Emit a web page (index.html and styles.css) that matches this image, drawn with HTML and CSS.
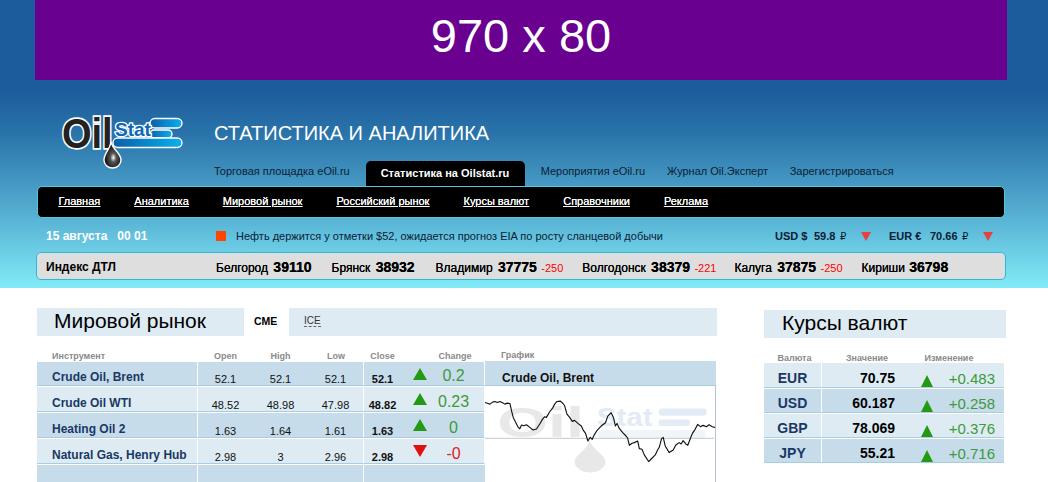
FILE: index.html
```html
<!DOCTYPE html>
<html lang="ru">
<head>
<meta charset="utf-8">
<title>OilStat</title>
<link rel="stylesheet" href="styles.css">
</head>
<body>
<div class="page">
  <header class="head">
    <div class="banner">970 x 80</div>
    <div class="brand">
      <svg class="logo" width="125" height="65" viewBox="0 -10 125 65">
        <defs>
          <linearGradient id="bar" x1="0" x2="1" y1="0" y2="0">
            <stop offset="0" stop-color="#0a5fa8"/>
            <stop offset="1" stop-color="#0ab0ee"/>
          </linearGradient>
          <radialGradient id="drop" cx="0.55" cy="0.6" r="0.5">
            <stop offset="0" stop-color="#fff"/>
            <stop offset="0.35" stop-color="#555"/>
            <stop offset="1" stop-color="#111"/>
          </radialGradient>
        </defs>
        <rect x="90" y="3.5" width="32" height="9.5" rx="4.7" fill="url(#bar)" stroke="#fff" stroke-width="1.4"/>
        <rect x="90" y="15" width="22" height="8" rx="4" fill="url(#bar)" stroke="#fff" stroke-width="1.4"/>
        <rect x="53" y="23" width="69" height="9.5" rx="4.7" fill="url(#bar)" stroke="#fff" stroke-width="1.4"/>
        <text class="logo-stat" x="55" y="21">Stat</text>
        <text class="logo-oil" x="2" y="29" transform="scale(1 1.13)">Oil</text>
        <path d="M51 27 C50 35 44 38 44 45 A8.5 8 0 0 0 61 45 C61 38 53 35 51 27 Z" fill="url(#drop)" stroke="#fff" stroke-width="1.4"/>
      </svg>
      <h1 class="brand-title">СТАТИСТИКА И АНАЛИТИКА</h1>
    </div>
    <div class="tabs">
      <a class="tab">Торговая площадка eOil.ru</a>
      <a class="tab tab-active">Статистика на Oilstat.ru</a>
      <a class="tab">Мероприятия eOil.ru</a>
      <a class="tab tab-j">Журнал Oil.Эксперт</a>
      <a class="tab tab-r">Зарегистрироваться</a>
    </div>
    <nav class="nav">
      <a>Главная</a>
      <a>Аналитика</a>
      <a>Мировой рынок</a>
      <a>Российский рынок</a>
      <a>Курсы валют</a>
      <a>Справочники</a>
      <a>Реклама</a>
    </nav>
    <div class="ticker">
      <span class="date">15 августа &nbsp; 00 01</span>
      <span class="square"></span>
      <span class="news">Нефть держится у отметки $52, ожидается прогноз EIA по росту сланцевой добычи</span>
      <span class="rate rate-usd"><b>USD $</b><span class="rate-val">59.8</span><span class="rub">₽</span><i class="tri-down"></i></span>
      <span class="rate rate-eur"><b>EUR €</b><span class="rate-val">70.66</span><span class="rub">₽</span><i class="tri-down"></i></span>
    </div>
    <div class="index">
      <span class="index-name">Индекс ДТЛ</span>
      <span class="city">Белгород <b>39110</b></span>
      <span class="city">Брянск <b>38932</b></span>
      <span class="city city-v">Владимир <b>37775</b> <em>-250</em></span>
      <span class="city city-g">Волгодонск <b>38379</b> <em>-221</em></span>
      <span class="city city-k">Калуга <b>37875</b> <em>-250</em></span>
      <span class="city city-l">Кириши <b>36798</b></span>
    </div>
  </header>
  <main class="main">
    <section class="market">
      <div class="market-bar">
        <h2 class="panel-title">Мировой рынок</h2>
        <span class="mtab-on">CME</span>
        <span class="mtab-rest"><a class="mtab">ICE</a></span>
      </div>
      <div class="market-body">
        <table class="mkt">
          <colgroup><col class="c-name"><col class="c-n"><col class="c-n"><col class="c-n3"><col class="c-close"><col class="c-close"><col class="c-change"></colgroup>
          <thead>
            <tr><th class="left">Инструмент</th><th>Open</th><th>High</th><th>Low</th><th>Close</th><th colspan="2" class="th-change">Change</th></tr>
          </thead>
          <tbody>
            <tr class="dark"><td class="name">Crude Oil, Brent</td><td>52.1</td><td>52.1</td><td class="sep">52.1</td><td class="close">52.1</td><td class="arr"><i class="up"></i></td><td class="chg pos">0.2</td></tr>
            <tr class="light"><td class="name">Crude Oil WTI</td><td>48.52</td><td>48.98</td><td class="sep">47.98</td><td class="close">48.82</td><td class="arr"><i class="up"></i></td><td class="chg pos">0.23</td></tr>
            <tr class="dark"><td class="name">Heating Oil 2</td><td>1.63</td><td>1.64</td><td class="sep">1.61</td><td class="close">1.63</td><td class="arr"><i class="up"></i></td><td class="chg pos">0</td></tr>
            <tr class="light"><td class="name">Natural Gas, Henry Hub</td><td>2.98</td><td>3</td><td class="sep">2.96</td><td class="close">2.98</td><td class="arr"><i class="down"></i></td><td class="chg neg">-0</td></tr>
            <tr class="dark last"><td class="name"></td><td></td><td></td><td class="sep"></td><td></td><td></td><td></td></tr>
          </tbody>
        </table>
        <div class="chart">
          <div class="chart-label">График</div>
          <div class="chart-title">Crude Oil, Brent</div>
          <svg class="chart-svg" width="231" height="96" viewBox="15 138 693 288">
            <g class="wm">
              <text class="wm-oil" x="52" y="292" textLength="262" lengthAdjust="spacingAndGlyphs">Oil</text>
              <text class="wm-stat" x="352" y="258" textLength="168" lengthAdjust="spacingAndGlyphs">Stat</text>
              <rect x="538" y="205" width="145" height="22" rx="11"/>
              <rect x="538" y="238" width="95" height="20" rx="10"/>
              <rect x="355" y="270" width="325" height="26" rx="13" opacity="0.5"/>
              <path class="wm-drop" d="M330 300 C325 330 285 345 285 365 A45 32 0 0 0 378 365 C378 345 338 330 330 300 Z"/>
            </g>
            <line x1="15" y1="295" x2="705" y2="295" stroke="#c8c8c8" stroke-width="3"/>
            <polyline class="line" points="15,187 24,190 30,192 38,186 45,184 52,187 60,184 68,188 75,192 82,189 90,190 95,212 100,232 108,248 115,262 120,266 125,255 132,257 140,254 150,262 160,270 170,267 180,252 188,238 195,230 200,232 210,215 218,205 225,192 232,184 242,183 250,190 255,197 262,222 270,232 278,244 285,241 295,250 305,258 312,272 318,280 325,303 332,292 338,298 345,283 352,272 365,258 378,248 385,228 395,218 402,232 408,258 413,250 420,266 430,278 440,288 445,295 450,316 458,310 465,308 475,303 480,326 488,328 495,345 508,365 518,355 528,345 535,330 540,322 547,296 552,292 558,318 570,338 582,330 590,315 600,308 606,312 612,302 620,312 626,316 634,295 640,280 648,268 656,253 664,260 672,256 682,260 690,254 700,260 708,262"/>
          </svg>
        </div>
      </div>
    </section>
    <section class="rates">
      <h2 class="panel-title rates-title">Курсы валют</h2>
      <table class="cur">
        <colgroup><col class="cc-a"><col class="cc-b"><col class="cc-c"><col class="cc-d"></colgroup>
        <thead>
          <tr><th class="th-val">Валюта</th><th>Значение</th><th colspan="2" class="th-izm">Изменение</th></tr>
        </thead>
        <tbody>
          <tr class="light"><td class="code">EUR</td><td class="val">70.75</td><td class="arr"><i class="up"></i></td><td class="chg pos">+0.483</td></tr>
          <tr class="dark"><td class="code">USD</td><td class="val">60.187</td><td class="arr"><i class="up"></i></td><td class="chg pos">+0.258</td></tr>
          <tr class="light"><td class="code">GBP</td><td class="val">78.069</td><td class="arr"><i class="up"></i></td><td class="chg pos">+0.376</td></tr>
          <tr class="dark"><td class="code">JPY</td><td class="val">55.21</td><td class="arr"><i class="up"></i></td><td class="chg pos">+0.716</td></tr>
        </tbody>
      </table>
    </section>
  </main>
</div>
</body>
</html>
```
FILE: styles.css
```css
* { box-sizing: border-box; }
html, body { margin: 0; padding: 0; height: 482px; overflow: hidden; background: #fff; }
body { font-family: "Liberation Sans", Arial, sans-serif; color: #000; }
.page { width: 1048px; height: 482px; overflow: hidden; }

.head {
  height: 288px;
  background: linear-gradient(180deg, #1c5c9c 0, #1c5c9c 90px, #2a74aa 135px, #5cb8d8 225px, #82ebf6 288px);
}
.banner {
  width: 972px; height: 80px; margin: 0 0 0 35px;
  background: #6a0090; color: #fff;
  font-size: 47px; line-height: 71px; text-align: center;
}
.brand { height: 81px; display: flex; align-items: flex-start; padding-left: 60px; }
.logo { margin-top: 25px; flex: none; }
.brand-title { margin: 41px 0 0 29px; font-size: 20px; font-weight: 400; line-height: 24px; color: #fff; }
.logo-oil { font-size: 38px; font-weight: 700; fill: #222; stroke: #fff; stroke-width: 3px; paint-order: stroke; font-family: "Liberation Sans", sans-serif; }
.logo-stat { font-size: 19px; font-weight: 700; fill: #0a68b4; stroke: #fff; stroke-width: 2.6px; paint-order: stroke; font-family: "Liberation Sans", sans-serif; }

.tabs { height: 25px; display: flex; align-items: flex-start; padding-left: 202.5px; }
.tab { padding: 0 11.5px; font-size: 11px; line-height: 21px; color: #0c2034; white-space: nowrap; }
.tab-active {
  width: 159px; height: 25px; margin: 0 4.5px; padding: 0 0 0 15px;
  background: #000; color: #fff; font-weight: 700; line-height: 24px;
  border-radius: 5px 5px 0 0;
}
.tab-j { padding-left: 10.5px; padding-right: 11px; }
.tab-r { padding-left: 10.5px; }
.nav {
  width: 968px; height: 32px; margin-left: 37px;
  display: flex; gap: 34.05px; align-items: center; padding: 0 0 2px 20.4px;
  background: #000; border: 1px solid #5cc4e0; border-radius: 5px;
}
.nav a { color: #fff; font-size: 11px; line-height: 13px; text-decoration: underline; white-space: nowrap; text-shadow: 0 0 .6px #fff; }

.ticker { height: 34px; display: flex; align-items: center; padding: 2px 0 0 46px; font-size: 11px; color: #0c2034; }
.date { width: 170px; font-size: 12px; font-weight: 700; color: #fff; white-space: nowrap; }
.square { width: 10px; height: 10px; background: #ff4500; flex: none; margin-right: 10px; }
.news { width: 539px; white-space: nowrap; }
.rate { display: flex; align-items: center; white-space: nowrap; }
.rate b { width: 39px; font-weight: 700; }
.rate-val { font-weight: 700; }
.rate-usd .rate-val { width: 26px; }
.rate-eur .rate-val { width: 32px; }
.rub { width: 21px; font-size: 10px; font-family: "DejaVu Sans", sans-serif; }
.rate-usd { width: 114px; }
.rate-usd b { width: 39px; }
.rate-eur b { width: 41px; }
.tri-down { width: 0; height: 0; border: 5px solid transparent; border-top: 9px solid #e8403c; border-bottom: 0; }

.index {
  width: 970px; height: 28px; margin-left: 36px;
  display: flex; align-items: center; padding: 1px 0 0 9px;
  background: #dedede; border: 1px solid #2cb8d8; border-radius: 5px;
  font-size: 12px; color: #000;
}
.index-name { width: 170px; font-weight: 700; white-space: nowrap; }
.city { margin-right: 20px; white-space: nowrap; text-shadow: 0 0 .6px #000; }
.city b { font-size: 14px; margin-left: 2px; }
.city em { font-style: normal; font-size: 11px; color: #f00; margin-left: 1px; text-shadow: none; }
.city-v { margin-left: 1px; margin-right: 19px; }
.city-g { margin-right: 18px; }
.city-k { margin-right: 19px; }
.city-l b { margin-left: 1px; }

.main { display: flex; padding: 20px 0 0 37px; }
.market { width: 680px; flex: none; }
.market-bar { display: flex; height: 28px; }
.panel-title { margin: 0; font-size: 21px; font-weight: 400; line-height: 25px; background: #deebf3; padding-left: 17px; height: 28px; }
.market-bar .panel-title { width: 207px; }
.mtab-on { width: 45px; padding-left: 10px; font-size: 10.5px; font-weight: 700; line-height: 26px; }
.mtab-rest { flex: 1; background: #deebf3; padding-left: 15px; font-size: 10px; line-height: 26px; color: #333; }
.mtab { border-bottom: 1px dashed #666; }

.market-body { display: flex; margin-top: 0; }
.mkt, .cur { table-layout: fixed; border-collapse: separate; border-spacing: 0; flex: none; }
.mkt { width: 448px; }
.c-name { width: 161px; } .c-n { width: 55px; } .c-n3 { width: 56px; } .c-close { width: 37px; } .c-change { width: 47px; }
th { font-size: 9px; font-weight: 700; color: #8a8a8a; text-align: center; vertical-align: bottom; padding: 0; line-height: 9px; }
.mkt thead th { height: 25px; }
th.left { text-align: left; padding-left: 15px; }
th.th-change { padding-left: 37px; padding-right: 13px; }
td { padding: 0; text-align: center; }
.dark td { background: #c7dcea; }
.light td { background: #deebf3; }
.mkt tbody td, .cur tbody td { border-top: 1px solid #fff; border-bottom: 1px solid #a8cce0; }
.mkt tbody td { height: 26px; font-size: 11px; line-height: 12px; vertical-align: bottom; color: #111; }
.mkt tbody tr:first-child td { height: 25px; }
.mkt .last td { border-bottom: 0; }
.mkt td.name { text-align: left; padding: 0 0 1px 15px; font-size: 12px; line-height: 13px; font-weight: 700; color: #1a3864; border-right: 1px solid #fff; white-space: nowrap; }
.mkt td.sep { border-right: 1px solid #fff; }
.mkt td.close { font-weight: 700; }
.mkt td.chg { font-size: 16px; line-height: 17px; padding: 0 15px 1px 0; border-right: 1px solid #fff; }
.mkt td.pos, .cur td.pos { color: #3c9a38; }
.mkt td.neg { color: #e02020; }
.mkt td.arr { vertical-align: middle; }
td.arr i { display: block; margin: 0 auto; width: 0; height: 0; border-left: 7px solid transparent; border-right: 7px solid transparent; }
.up { border-bottom: 12px solid #229a14; }
.down { border-top: 12px solid #e01010; }

.chart { width: 231px; flex: none; }
.chart-label { height: 25px; padding: 15px 0 0 16px; font-size: 9px; line-height: 9px; font-weight: 700; color: #8a8a8a; }
.chart-title { height: 25px; padding: 10px 0 0 17px; font-size: 12px; line-height: 14px; font-weight: 700; color: #111; background: #c7dcea; border-bottom: 1px solid #a8cce0; }
.chart-svg { display: block; border-right: 1px solid #b4c2d4; }
.wm { fill: #e8eff8; }
.wm-oil { font-size: 130px; font-weight: 700; font-family: "Liberation Sans", sans-serif; fill: #e8e8e8; }
.wm-stat { font-size: 76px; font-weight: 700; font-family: "Liberation Sans", sans-serif; fill: #e2ebf6; }
.wm rect { fill: #e2ebf6; }
.wm .wm-drop { fill: #e8e8e8; }
.line { fill: none; stroke: #111; stroke-width: 3.4; stroke-linejoin: round; }

.rates { margin: 2px 0 0 47px; width: 242px; flex: none; }
.rates-title { padding-left: 18px; }
.cur { width: 240px; }
.cc-a { width: 58px; } .cc-b { width: 90px; } .cc-c { width: 22px; } .cc-d { width: 70px; }
.cur thead th { height: 25px; }
th.th-val { padding-left: 3px; }
th.th-izm { padding-right: 18px; }
.cur tbody td { height: 25px; vertical-align: bottom; }
.cur tbody tr:first-child td { height: 25px; border-top: 0; }
.cur td.code { font-size: 14px; line-height: 17px; font-weight: 700; color: #1a3864; border-right: 1px solid #fff; }
.cur td.val { font-size: 14px; line-height: 17px; padding: 0 17px 0 0; font-weight: 700; text-align: right; }
.cur td.chg { font-size: 15px; line-height: 17px; padding: 0 9px 0 0; text-align: right; }
.cur td.arr { vertical-align: bottom; }
.cur td.arr i { margin: 0 0 0 9px; border-left-width: 6.5px; border-right-width: 6.5px; }
```
